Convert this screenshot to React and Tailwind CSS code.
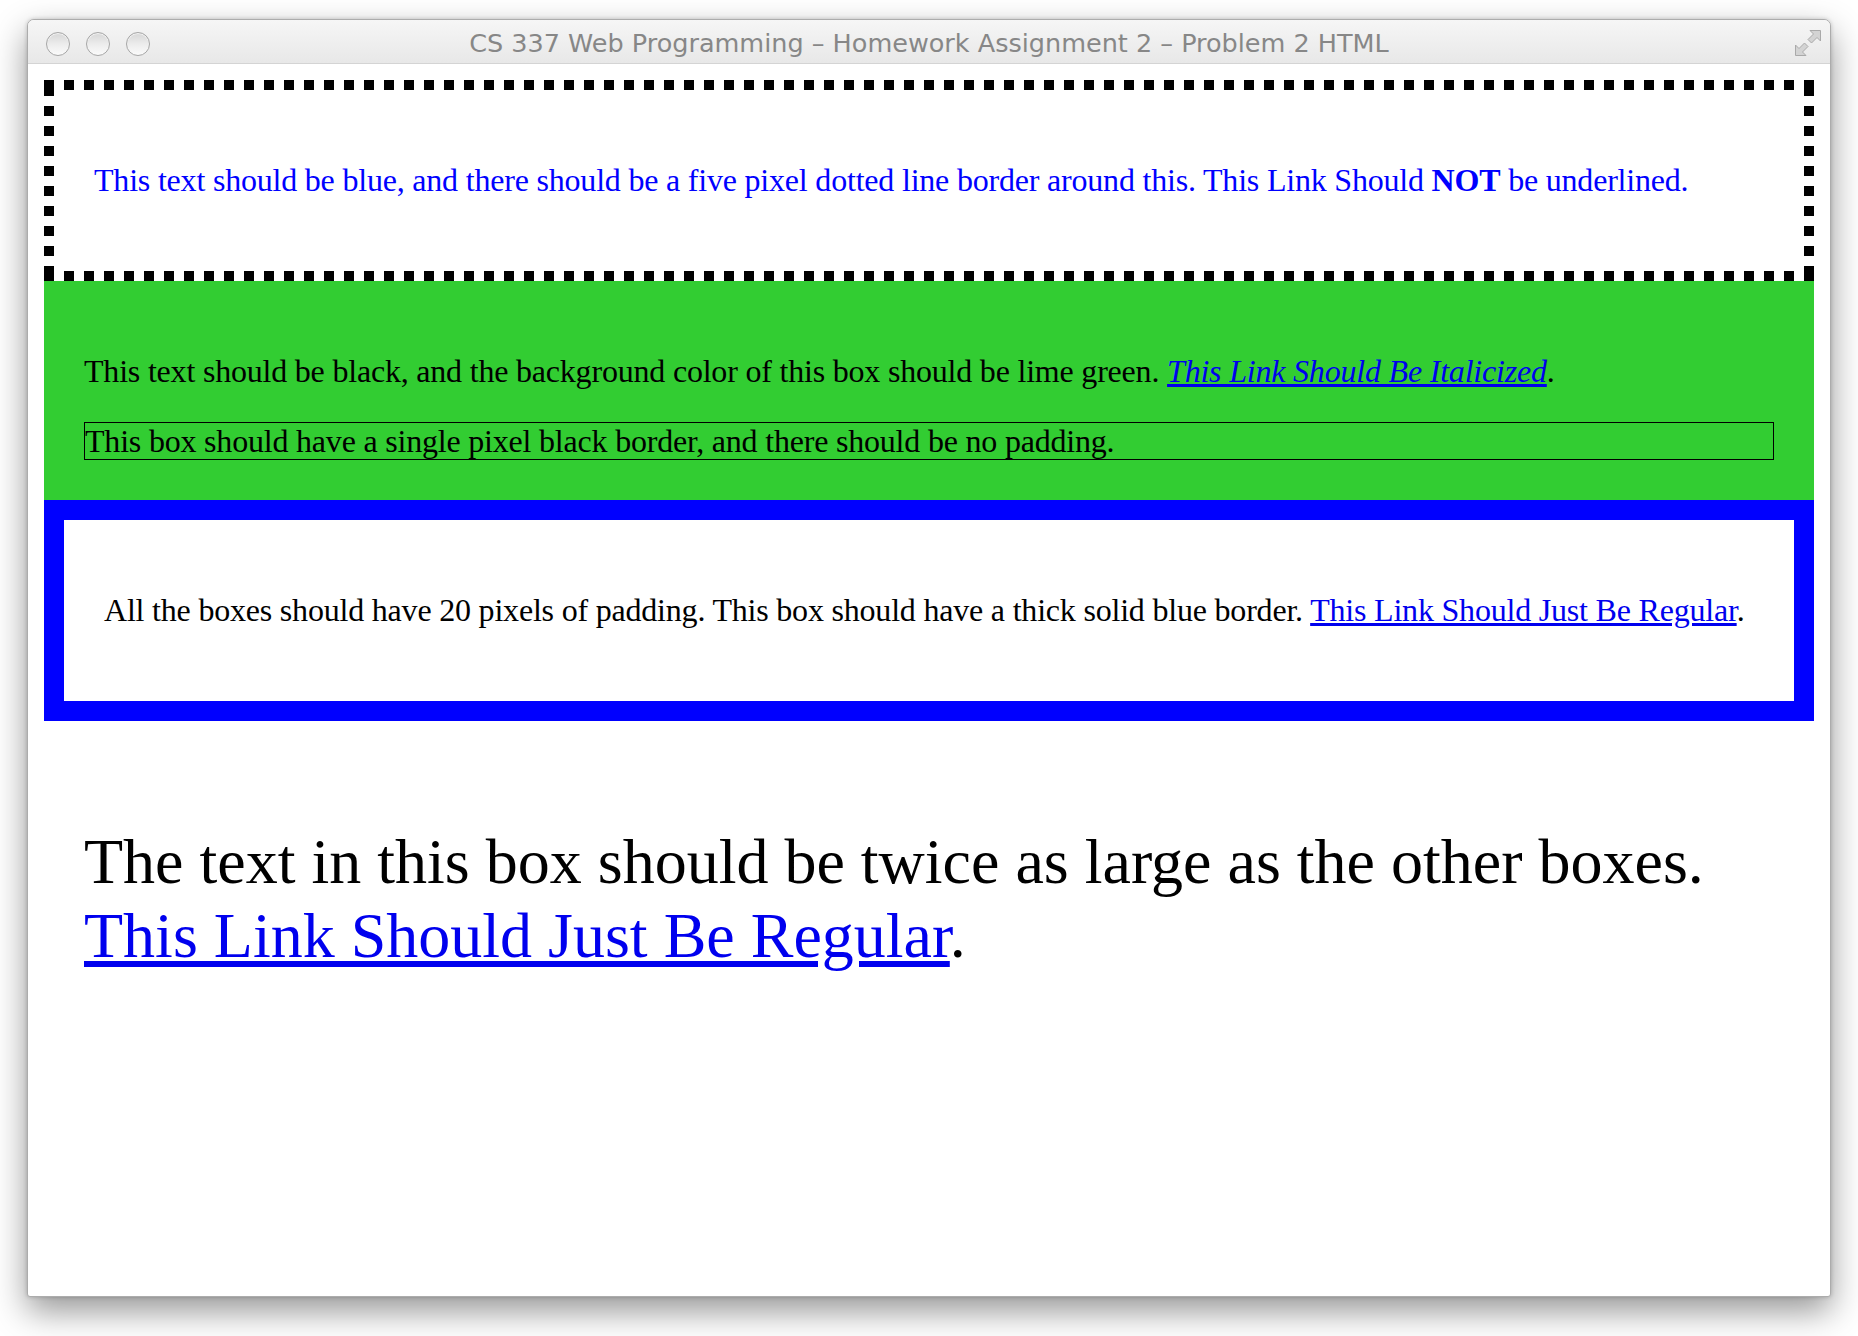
import React from 'react';

const serif = { fontFamily: '"Liberation Serif", "Times New Roman", serif' };

function Light() {
  return (
    <div className="h-[24px] w-[24px] rounded-full border border-[#a6a6a6] bg-linear-to-b from-[#d6d6d6] via-[#ececec] to-[#fbfbfb] shadow-[inset_0_1px_1px_rgba(255,255,255,0.8)]" />
  );
}

function ResizeIcon() {
  return (
    <svg width="28" height="28" viewBox="0 0 28 28" className="absolute right-[8px] top-[9px]">
      <g fill="#d3d3d3" stroke="#a9a9a9" strokeWidth="1" strokeLinejoin="round">
        <path d="M16 1.5 L26.5 1.5 L26.5 12 L23 8.5 L17.5 14 L14 10.5 L19.5 5 Z" />
        <path d="M12 26.5 L1.5 26.5 L1.5 16 L5 19.5 L10.5 14 L14 17.5 L8.5 23 Z" />
      </g>
    </svg>
  );
}

export default function App() {
  return (
    <div className="min-h-screen bg-white px-[27px] pb-[40px] pt-[19px]">
      <div className="flex h-[1278px] flex-col overflow-hidden rounded-b-[3px] rounded-t-[7px] border border-[#acacac] bg-white shadow-[0_14px_34px_rgba(0,0,0,0.42),0_0_4px_rgba(0,0,0,0.2)]">
        {/* title bar */}
        <div className="relative flex h-[44px] shrink-0 items-center border-b border-[#d4d4d4] bg-linear-to-b from-[#f6f6f6] to-[#e8e8e8] pt-[4px]">
          <div className="flex items-center gap-[16px] pl-[18px]">
            <Light />
            <Light />
            <Light />
          </div>
          <div
            className="absolute inset-x-0 top-[4px] bottom-0 flex items-center justify-center text-[25.5px] text-[#878787]"
            style={{ fontFamily: '"DejaVu Sans", "Noto Sans", sans-serif' }}
          >
            CS 337 Web Programming – Homework Assignment 2 – Problem 2 HTML
          </div>
          <ResizeIcon />
        </div>

        {/* page body */}
        <div className="flex-1 p-[16px] text-[32px] leading-[36.8px] tracking-[-0.2px] text-black" style={serif}>
          {/* square-dotted 10px border drawn with background tiles */}
          <div className="p-[50px] text-[#0000ff] [background-image:linear-gradient(90deg,#000_10px,transparent_0),linear-gradient(90deg,#000_10px,transparent_0),linear-gradient(#000_10px,transparent_0),linear-gradient(#000_10px,transparent_0)] [background-size:20px_10px,20px_10px,10px_20px,10px_20px] [background-position:left_top,left_bottom,left_0_top_6px,right_0_top_6px] [background-repeat:repeat-x,repeat-x,repeat-y,repeat-y]">
            <p className="my-[32px]">
              This text should be blue, and there should be a five pixel dotted line border around this.{' '}
              <a href="#" className="text-[#0000ff] no-underline">
                This Link Should <b>NOT</b> be underlined.
              </a>
            </p>
          </div>

          <div className="bg-[#32cd32] p-[40px]">
            <p className="my-[32px]">
              This text should be black, and the background color of this box should be lime green.{' '}
              <a href="#" className="italic text-[#0000ee] underline">
                This Link Should Be Italicized
              </a>
              .
            </p>
            <div className="border border-black">
              This box should have a single pixel black border, and there should be no padding.
            </div>
          </div>

          <div className="border-[20px] border-[#0000ff] p-[40px]">
            <p className="my-[32px]">
              All the boxes should have 20 pixels of padding. This box should have a thick solid blue border.{' '}
              <a href="#" className="text-[#0000ee] underline">
                This Link Should Just Be Regular
              </a>
              .
            </p>
          </div>

          <div className="p-[40px] text-[64px] leading-[73.6px] tracking-normal">
            <p className="my-[64px]">
              The text in this box should be twice as large as the other boxes.{' '}
              <a href="#" className="text-[#0000ee] underline">
                This Link Should Just Be Regular
              </a>
              .
            </p>
          </div>
        </div>
      </div>
    </div>
  );
}
